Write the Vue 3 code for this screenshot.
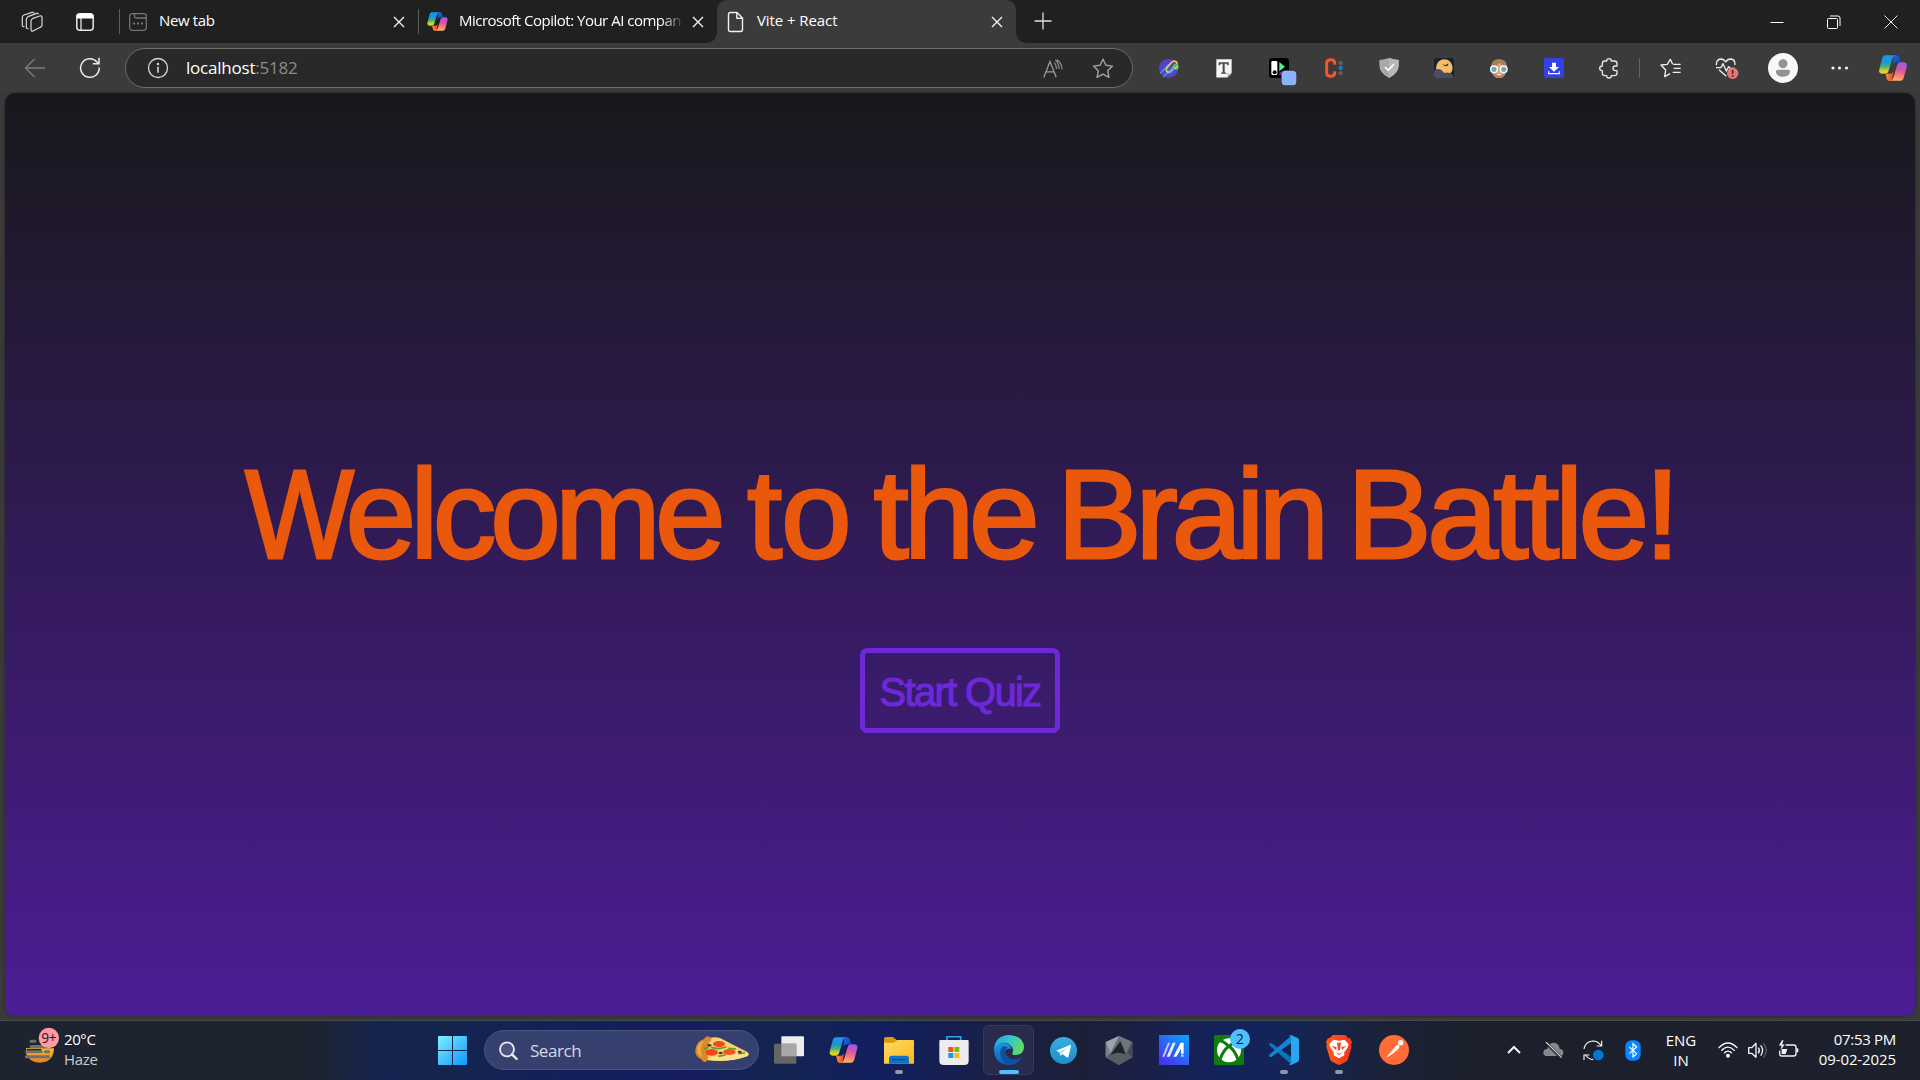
<script setup>
const address = { host: 'localhost', port: ':5182' }
</script>

<template>
  <div class="screen">
    <!-- shared artwork -->
    <svg class="defs" width="0" height="0" aria-hidden="true">
      <defs>
        <linearGradient id="cpA" x1="0" y1="0" x2="0" y2="1">
          <stop offset="0" stop-color="#1c9bea" /><stop offset=".35" stop-color="#1a93d8" /><stop offset=".62" stop-color="#48b07a" /><stop offset=".85" stop-color="#d8d426" /><stop offset="1" stop-color="#f5c518" />
        </linearGradient>
        <linearGradient id="cpB" x1=".6" y1="0" x2=".4" y2="1">
          <stop offset="0" stop-color="#9a5cf0" /><stop offset=".4" stop-color="#d9569c" /><stop offset=".7" stop-color="#fb7a7c" /><stop offset="1" stop-color="#ffb35a" />
        </linearGradient>
        <linearGradient id="cpC" x1="0" y1="0" x2="1" y2="1">
          <stop offset="0" stop-color="#1668d8" /><stop offset="1" stop-color="#1b3fc9" />
        </linearGradient>
        <linearGradient id="cpD" x1="0" y1="0" x2="1" y2="0">
          <stop offset="0" stop-color="#f39a2c" /><stop offset="1" stop-color="#e8433f" />
        </linearGradient>
        <symbol id="copilot" viewBox="0 0 84 78">
          <path d="M44 1h8c5 0 8 3 9 7l4 14H53c-6 0-9 3-11 8z" fill="url(#cpC)" />
          <path d="M20 56h13c5 0 8-3 10-8l-4 30h-8c-5 0-7-4-8-8z" fill="url(#cpD)" />
          <path d="M19 1h30c-6 2-8 6-10 13L29 47c-2 6-5 9-10 9H10C2 56-1 50 1 43L9 12C11 5 14 1 19 1z" fill="url(#cpA)" />
          <path d="M65 22h9c8 0 11 6 9 13l-8 31c-2 7-5 11-10 11H35c5-2 7-6 9-12l10-33c2-7 5-10 11-10z" fill="url(#cpB)" />
        </symbol>
        <symbol id="cross" viewBox="0 0 12 12"><path d="M1 1l10 10M11 1L1 11" stroke="#f2f2f2" stroke-width="1.4" fill="none" /></symbol>
      </defs>
    </svg>

    <header class="tabstrip">
      <div class="cell lead">
        <svg width="22" height="22" viewBox="64 32 66 66" fill="none" stroke="#d8d8d8" stroke-width="3.6" stroke-linejoin="round" stroke-linecap="round">
          <path d="M98 55l22-8q7-2 7 5v22q0 5-5 7l-22 11q-6 2-6-5V62q0-5 4-7z" /><path d="M85 85q-5 1-5-5V57q0-5 5-8l26-10q4-1 5 2" /><path d="M73 79q-5 1-5-5V51q0-5 5-7l24-8q5-1 6 2" />
        </svg>
      </div>
      <div class="cell spaces">
        <svg width="18" height="18" viewBox="0 0 18 18"><rect x=".8" y=".8" width="16.4" height="16.4" rx="3" fill="none" stroke="#e6e6e6" stroke-width="1.5" /><path d="M.5 5.500V4a3.500 3.500 0 013.500-3.500h10A3.500 3.500 0 0117.500 4v1.500z" fill="#fff" /><path d="M5 5v12" stroke="#e6e6e6" stroke-width="1.300" /></svg>
      </div>
      <div class="tab">
        <svg class="fav" width="20" height="20" viewBox="0 0 20 20" fill="none" stroke="#747474" stroke-width="1.300"><rect x="1.700" y="1.700" width="16.600" height="16.600" rx="2.500" /><path d="M6.500 2v2.500q0 1.500 1.500 1.500h10" /><path d="M5 11.500h2M9 11.500h2M13 11.500h2" stroke-width="1.800" /></svg>
        <span class="title t1">New tab</span>
        <svg class="x" width="12" height="12"><use href="#cross" /></svg>
      </div>
      <div class="tab">
        <svg class="fav" width="21" height="19"><use href="#copilot" /></svg>
        <span class="title t2">Microsoft Copilot: Your AI compan</span>
        <svg class="x" width="12" height="12"><use href="#cross" /></svg>
      </div>
      <div class="tab active">
        <svg class="fav" width="20" height="22" viewBox="0 0 20 22" fill="none" stroke="#f0f0f0" stroke-width="1.400" stroke-linejoin="round"><path d="M4.500 1.500h6.500l5.500 5.500v11.500q0 2-2 2h-10q-2 0-2-2v-15q0-2 2-2z" /><path d="M10.800 1.700V7.200h5.500" /></svg>
        <span class="title t3">Vite + React</span>
        <svg class="x" width="12" height="12"><use href="#cross" /></svg>
      </div>
      <svg class="plus" width="18" height="18" viewBox="0 0 18 18"><path d="M9 .5v17M.5 9h17" stroke="#dedede" stroke-width="1.300" /></svg>
      <div class="window">
        <svg width="14" height="14" viewBox="0 0 14 14"><path d="M.5 7.500h13" stroke="#fff" /></svg>
        <svg width="14" height="14" viewBox="0 0 14 14" fill="none" stroke="#fff"><rect x=".5" y="3.500" width="10" height="10" rx="1" /><path d="M3 1h8q2 0 2 2v8" /></svg>
        <svg width="14" height="14" viewBox="0 0 14 14"><path d="M.5.5l13 13M13.500.5l-13 13" stroke="#e8e8e8" /></svg>
      </div>
    </header>

    <nav class="toolbar">
      <div class="cell nav back">
        <svg width="22" height="20" viewBox="0 0 22 20" fill="none" stroke="#7d7d7d" stroke-width="1.300"><path d="M21 10H1.500M10.500 1L1.500 10l9 9" /></svg>
      </div>
      <div class="cell nav">
        <svg width="22" height="22" viewBox="0 0 22 22" fill="none" stroke="#ededed" stroke-width="1.500"><path d="M20.200 10.500A9.300 9.300 0 1118 5L20 6.500M20 .8v5.900h-6.200" /></svg>
      </div>
      <div class="omnibox">
        <svg width="22" height="22" viewBox="0 0 22 22" fill="none" stroke="#d6d6d6" stroke-width="1.300"><circle cx="11" cy="11" r="9.500" /><path d="M11 9.700v6" stroke-width="1.600" /><circle cx="11" cy="6.900" r=".6" fill="#d6d6d6" /></svg>
        <span class="url">{{ address.host }}<span class="port">{{ address.port }}</span></span>
        <svg class="read" width="20" height="19" viewBox="0 0 20 19" fill="none" stroke="#9a9a9a" stroke-width="1.300"><path d="M.8 18.300L7 2.500l6.200 15.800M3 12.800h8" /><path d="M11.500 3.500q2 2.500 2 6.500M12.300 1q3.700 3 3.700 9M14 .8q5 3.200 5 9.800" stroke-width="1.100" /></svg>
        <svg class="star" width="22" height="21" viewBox="0 0 22 21" fill="none" stroke="#a3a3a3" stroke-width="1.400" stroke-linejoin="round"><path d="M11 1.200l2.900 6 6.600.9-4.800 4.600 1.200 6.700L11 16.200l-5.900 3.200 1.200-6.700L1.500 8.100l6.600-.9z" /></svg>
      </div>

      <div class="extensions">
        <div class="cell"><svg width="20" height="20" viewBox="0 0 60 60"><circle cx="29" cy="31" r="29" fill="#5b3fc4" /><path d="M3 47L30 18M13 57L48 20" stroke="#29a8f2" stroke-width="4" /><path d="M21 33l16-19q8-8 15-2 6 7-2 14L36 41q-7 4-12-1-4-4-1-9" fill="none" stroke="#f4c63d" stroke-width="5" /><path d="M25 46q8 0 14-7l10-10" stroke="#37b5fa" stroke-width="3" fill="none" /><circle cx="50" cy="27" r="9" fill="#61b94c" /><path d="M45 27l4 4 7-7" stroke="#fff" stroke-width="2.500" fill="none" /></svg></div>
        <div class="cell"><svg width="16" height="19" viewBox="0 0 48 56"><path d="M1 0h46v41L34 55H1z" fill="#f4f4f4" /><path d="M34 55V43h13z" fill="#bdbdbd" /><path d="M8 9h30v9h-4l-2-4h-6v25l5 2v3H15v-3l5-2V14h-6l-2 4H8z" fill="#484848" /></svg></div>
        <div class="cell"><svg class="tall" width="28" height="28" viewBox="0 0 84 84"><rect width="60" height="60" rx="10" fill="#000" /><rect x="7" y="9" width="18" height="42" rx="4" fill="#fff" /><circle cx="17" cy="43" r="6" fill="#000" /><path d="M31 12l17 14-17 14z" fill="#55f08a" /><path d="M31 45l9-7v12h-9z" fill="#9b22c9" /><rect x="36" y="36" width="48" height="48" rx="13" fill="#2b3242" /><rect x="38" y="38" width="44" height="44" rx="11" fill="#8ab4f8" /></svg></div>
        <div class="cell"><svg width="18" height="20" viewBox="0 0 54 60"><path d="M29 20v-5q0-10-12-10T5 16v28q0 11 12 11t12-10v-5" fill="none" stroke="#fa5527" stroke-width="9" /><circle cx="47" cy="15" r="6" fill="#646464" /><circle cx="47" cy="46" r="6" fill="#646464" /><circle cx="47" cy="30" r="6.500" fill="#1878d2" /></svg></div>
        <div class="cell"><svg width="20" height="20" viewBox="0 0 60 60"><path d="M30 0q14 5 29 6v16q0 24-29 38Q1 46 1 22V6Q16 5 30 0z" fill="#a9a9a9" /><path d="M30 0q14 5 29 6v16q0 24-29 38z" fill="#b8b8b8" /><path d="M18 27l10 10 17-19" fill="none" stroke="#fff" stroke-width="5" /></svg></div>
        <div class="cell"><svg width="20" height="20" viewBox="0 0 60 60"><clipPath id="owl"><rect width="60" height="60" rx="7" /></clipPath><g clip-path="url(#owl)"><rect width="60" height="60" fill="#151f38" /><circle cx="31" cy="29" r="25" fill="#f6bb68" /><path d="M27 18l7 4 9-6q1 8-7 9-7 0-9-7z" fill="#2a2a35" /><path d="M0 38q10-9 22-2l9 9q15-4 24 4l5 11H0z" fill="#4a4c66" /></g></svg></div>
        <div class="cell"><svg width="20" height="19" viewBox="0 0 60 57"><path d="M6 32Q3 1 30 0q27 1 24 32z" fill="#a3834f" /><path d="M9 26q14-3 23-15 7 11 19 15v9Q49 57 30 57T9 35z" fill="#e5a37a" /><path d="M12 43q18 4 36 0-4 14-18 14T12 43z" fill="#c47f5a" /><path d="M24 47h13" stroke="#fff" stroke-width="3" /><circle cx="15" cy="31" r="10" fill="#6fa9bc" stroke="#f2fbfb" stroke-width="4.500" /><circle cx="44" cy="31" r="10" fill="#6fa9bc" stroke="#f2fbfb" stroke-width="4.500" /></svg></div>
        <div class="cell"><svg width="20" height="20" viewBox="0 0 60 60"><rect width="60" height="60" rx="5" fill="#3440e4" /><path d="M24 14h12v13h9L30 41 15 27h9z" fill="#fff" /><path d="M14 40v7h32v-7" fill="none" stroke="#fff" stroke-width="3.500" /></svg></div>
        <div class="cell"><svg width="20" height="21" viewBox="0 0 60 63" fill="none" stroke="#e6e6e6" stroke-width="4" stroke-linejoin="round"><path d="M17 9h6q0-7 7-7t7 7h9q8 0 8 8v7h-5q-7 0-7 7t7 7h5v7q0 8-8 8h-9q0 7-7 7t-7-7h-6q-7 0-7-8v-7q-8 0-8-7t8-7v-7q0-8 7-8z" /></svg></div>
      </div>
      <span class="rule"></span>
      <div class="cell fav2"><svg width="21" height="20" viewBox="0 0 63 60" fill="none" stroke="#ededed" stroke-width="4" stroke-linejoin="round"><path d="M38 43h24M41 31h21M40 19h22M38 19L31 4l-9 15-19 2 14 15-3 20 16-9" /></svg></div>
      <div class="cell heart"><svg width="24" height="21" viewBox="0 0 72 63" fill="none" stroke="#ededed" stroke-width="4" stroke-linejoin="round"><path d="M4 22Q3 4 18 3q9 0 14 9Q37 3 47 3q14 1 13 18M3 29h15l6-12 10 22 7-13 5 5h14M12 35l22 20" /><circle cx="53" cy="46" r="17" fill="#e77777" stroke="none" /><path d="M53 36v12M53 51v5" stroke="#4a2626" stroke-width="5" /></svg></div>
      <div class="cell avatar"><svg width="30" height="30" viewBox="0 0 90 90"><circle cx="45" cy="45" r="45" fill="#f8f8f8" /><circle cx="45" cy="32" r="13.500" fill="#929292" /><path d="M30 50h30q7 0 6 7-2 14-21 14T24 57q-1-7 6-7z" fill="#929292" /></svg></div>
      <div class="cell dots"><svg width="18" height="4" viewBox="0 0 18 4" fill="#f2f2f2"><circle cx="2" cy="2" r="1.600" /><circle cx="8.500" cy="2" r="1.600" /><circle cx="15.500" cy="2" r="1.600" /></svg></div>
      <div class="cell side"><svg width="28" height="26"><use href="#copilot" /></svg></div>
    </nav>

    <main class="page">
      <h1>
        <span class="word welcome"><span class="cap-w">W</span>elcome</span>{{ ' ' }}<span class="word to">to</span>{{ ' ' }}<span class="word the">the</span>{{ ' ' }}<span class="word brain">Brain</span>{{ ' ' }}<span class="word battle">Battle!</span>
      </h1>
      <button type="button">Start Quiz</button>
    </main>

    <footer class="taskbar">
      <div class="weather">
        <svg width="36" height="38" viewBox="72 78 108 114"><defs><linearGradient id="sun" x1="0" y1="0" x2="0" y2="1"><stop offset="0" stop-color="#f8c02e" /><stop offset="1" stop-color="#ee7a1c" /></linearGradient></defs><path d="M78 145h84q-2 43-43 43-32 0-41-28z" fill="url(#sun)" /><path d="M80 147h44v6H80z" fill="#1d242f" /><path d="M93 124h12M93 139.500h42M80 155h44M136 155h10M79 170h67" stroke="#6f7072" stroke-width="9" stroke-linecap="round" /><circle cx="146.500" cy="114" r="30.500" fill="#ff99a4" /><text x="146.500" y="129" class="badge nine">9+</text></svg>
        <div class="lines"><span class="temp">20°C</span><span class="haze">Haze</span></div>
      </div>

      <div class="apps">
        <div class="cell start"><svg width="29" height="29" viewBox="0 0 29 29"><defs><linearGradient id="win" x1="0" y1="0" x2="1" y2="1"><stop offset="0" stop-color="#7df0ff" /><stop offset="1" stop-color="#1095fb" /></linearGradient></defs><path d="M1 0h13v14H0V1q0-1 1-1zM15 0h13q1 0 1 1v13H15zM0 15h14v14H1q-1 0-1-1zM15 15h14v13q0 1-1 1H15z" fill="url(#win)" /></svg></div>
        <div class="search">
          <svg width="19" height="19" viewBox="0 0 57 57" fill="none"><circle cx="24" cy="25" r="21" stroke="#e9ebf2" stroke-width="5.500" fill="#4b5580" /><path d="M39 40l14 14" stroke="#e9ebf2" stroke-width="7" stroke-linecap="round" /></svg>
          <span>Search</span>
          <svg class="pizza" width="54" height="26" viewBox="825 78 162 78"><path d="M856 92q18-15 44-8l82 42q7 6 1 12-50 21-127 12z" fill="#f9d06b" /><path d="M858 148q60 12 125-10l3-7-22-8-80 18z" fill="#fbe08c" /><path d="M851 88q8-12 17-8 10 4 4 12-15 16-8 38 2 18-4 24-10 6-14-5-22-10-20-28 2-26 25-33z" fill="#d98a2a" /><path d="M851 92q-18 6-19 26 0 16 14 24-8-30 5-50z" fill="#edab45" /><ellipse cx="897" cy="102" rx="18" ry="9" fill="#ee4a23" /><ellipse cx="875" cy="127" rx="19" ry="10" fill="#f0481e" /><ellipse cx="928" cy="126" rx="19" ry="9" fill="#f25322" /><path d="M852 116l14-3M873 112l22 4 24-5M925 115l23 2M895 139l22-4M955 131l20-2" stroke="#5d9e25" stroke-width="5" fill="none" /><g fill="#542c3a"><ellipse cx="868" cy="106" rx="6" ry="4" /><ellipse cx="902" cy="129" rx="6" ry="4" /><ellipse cx="959" cy="126" rx="6" ry="4" /></g></svg>
        </div>
        <div class="cell"><svg width="30" height="28" viewBox="0 0 90 84"><rect x="22" y="1" width="68" height="60" rx="3" fill="#ededed" /><rect y="23" width="67" height="60" rx="3" fill="#656565" /><path d="M22 23h45v38H22z" fill="#a8a8a8" /></svg></div>
        <div class="cell"><svg width="29" height="26"><use href="#copilot" /></svg></div>
        <div class="cell"><svg width="30" height="27" viewBox="0 0 90 81"><path d="M0 5q0-5 5-5h22l11 9v12H0z" fill="#dd9a0b" /><path d="M0 17h30l9-8h48q3 0 3 4v67H0z" fill="url(#fold)" /><defs><linearGradient id="fold" x1="0" y1="0" x2="1" y2="1"><stop offset="0" stop-color="#ffda68" /><stop offset="1" stop-color="#fbb917" /></linearGradient></defs><path d="M15 80V65q0-9 8-9h44q8 0 8 9v15z" fill="#1173c8" /><path d="M26 68h37" stroke="#0b4b8c" stroke-width="4" stroke-linecap="round" /></svg><i class="run"></i></div>
        <div class="cell"><svg width="30" height="29" viewBox="0 0 90 87"><path d="M24 20V2h41v18" fill="none" stroke="#29a9ea" stroke-width="5" /><path d="M1 15q0-3 3-3h82q3 0 3 3v59q0 13-13 13H14Q1 87 1 74z" fill="#ececec" /><path d="M28 33h15v15H28z" fill="#f25022" /><path d="M46 33h15v15H46z" fill="#7fba00" /><path d="M28 51h15v15H28z" fill="#00a4ef" /><path d="M46 51h15v15H46z" fill="#ffb900" /></svg></div>
        <div class="cell focus"><svg width="30" height="30" viewBox="0 0 90 90"><defs><linearGradient id="edA" x1="0" y1=".3" x2="1" y2=".5"><stop offset="0" stop-color="#22a5e8" /><stop offset=".5" stop-color="#35c4c9" /><stop offset="1" stop-color="#62dd5c" /></linearGradient><linearGradient id="edB" x1="0" y1="0" x2="0" y2="1"><stop offset="0" stop-color="#1b97e4" /><stop offset="1" stop-color="#0960b8" /></linearGradient></defs><path d="M0 45Q2 24 26 24q24 1 26 18-13-5-18 6-4 16 14 25 16 6 33-5Q70 90 45 90 2 88 0 45z" fill="url(#edB)" /><path d="M28 33q-11 9-9 26 3 25 29 31 20-2 33-22-14 8-29 3-20-8-18-25 2-7 7-8-3-5-13-5z" fill="#0f4f9f" /><path d="M0 44Q2 2 45 0q44 2 45 37-1 22-23 23-14 0-12-6 5-6-1-18Q44 22 26 23 6 26 0 44z" fill="url(#edA)" /></svg><i class="run on"></i></div>
        <div class="cell"><svg width="27" height="27" viewBox="0 0 81 81"><defs><linearGradient id="tg" x1="0" y1="0" x2="0" y2="1"><stop offset="0" stop-color="#38aee0" /><stop offset="1" stop-color="#1b8fc7" /></linearGradient></defs><circle cx="40.500" cy="40.500" r="40.500" fill="url(#tg)" /><path d="M18 41l42-17q4-1 3 4l-8 32q-1 4-5 1L37 51l-6 6-3-12z" fill="#fff" /><path d="M28 45l26-15-19 19-4 8z" fill="#b8d9ea" /></svg></div>
        <div class="cell"><svg width="28" height="29" viewBox="0 0 84 87"><path d="M42 0l40 18v46L42 87 2 64V18z" fill="#687078" /><path d="M42 0l40 18-16 32z" fill="#6c757d" /><path d="M42 0L2 18l14 34z" fill="#9aa4ad" /><path d="M2 18v46l14-12z" fill="#77818a" /><path d="M82 18v46L66 50z" fill="#444a51" /><path d="M2 64l40 23 40-23-16-12-50 2z" fill="#565d65" /><path d="M46 16l16 38-22-4-24 6z" fill="#20242a" /></svg></div>
        <div class="cell"><svg width="30" height="30" viewBox="0 0 90 90"><defs><linearGradient id="ma" x1=".1" y1="1" x2=".9" y2="0"><stop offset="0" stop-color="#4b2cf2" /><stop offset="1" stop-color="#0aa1f8" /></linearGradient></defs><rect width="90" height="90" fill="url(#ma)" /><path d="M10 65l17-42h6L16 65z" fill="#c9cfff" /><path d="M23 65l18-42h9L32 65z" fill="#e6eaff" /><path d="M43 65l22-42h9v33h-8V41L52 65z" fill="#fff" /><path d="M66 59h8v6h-8z" fill="#bcd9ff" /></svg></div>
        <div class="cell"><svg class="xbox" width="36" height="36" viewBox="402 57 108 108"><rect x="402" y="75" width="90" height="90" rx="5" fill="#107c10" /><circle cx="447" cy="121" r="36" fill="#fff" /><path d="M447 110q-13-15-26-18M447 110q13-15 26-18M447 108q-19 15-27 41M447 108q19 15 27 41" fill="none" stroke="#107c10" stroke-width="9" /><circle cx="480" cy="87" r="30" fill="#4cc2ff" /><text x="480" y="101" class="badge">2</text></svg></div>
        <div class="cell"><svg width="30" height="30" viewBox="0 0 90 90"><path d="M7 24q-3-1-5 1-4 3 0 7l61 53 5 2V67z" fill="#0a74bd" /><path d="M7 66q-3 1-5-1-4-3 0-7L63 5l5-3v21z" fill="#1284d0" /><path d="M66 0l20 9q4 2 4 6v60q0 4-4 6l-20 9q-4 0-6-3 6 1 6-5V8q0-6-6-5 2-3 6-3z" fill="#2aa6f1" /></svg><i class="run"></i></div>
        <div class="cell"><svg width="26" height="30" viewBox="0 0 78 90"><defs><linearGradient id="br" x1="0" y1="0" x2="1" y2="0"><stop offset="0" stop-color="#ff5b1a" /><stop offset="1" stop-color="#f6331b" /></linearGradient></defs><path d="M20 0h38l9 10 5-1 6 12-3 8 2 6-12 40q-2 5-26 15Q15 80 13 75L1 35l2-6-3-8L6 9l5 1z" fill="url(#br)" /><path d="M22 14l17 3 17-3 12 14-3 9q-2 5-11 16 3 9-3 10l-12 7-12-7q-6-1-3-10-9-11-11-16l-3-9z" fill="#fff" /><path d="M17 32l15 5-2 8zM61 32l-15 5 2 8zM33 22l6 2 6-2-3 24h-6zM29 52l10 4 10-4-10 9z" fill="#f9471b" /></svg><i class="run"></i></div>
        <div class="cell"><svg width="30" height="30" viewBox="0 0 90 90"><circle cx="45" cy="45" r="45" fill="#ff6c37" /><circle cx="65" cy="23" r="8" fill="#fff" /><path d="M21 68l14-16 16-20q6-4 10 0 2 4-3 9L39 58z" fill="#fff" /><path d="M36 54l17-17M60 36v9l-9 4" stroke="#d9a38d" stroke-width="2" fill="none" /></svg></div>
      </div>

      <div class="tray">
        <svg class="chev" width="14" height="10" viewBox="0 0 14 10"><path d="M1 8l6-6 6 6" fill="none" stroke="#f4f4f4" stroke-width="2" /></svg>
        <svg class="cloud" width="21" height="17" viewBox="0 0 63 51"><path d="M13 42q-12 0-12-10t12-11Q17 2 32 2q16 1 18 18 11 1 11 12 0 10-11 10z" fill="#85888c" /><path d="M9 2l46 46" stroke="#1c212c" stroke-width="9" /><path d="M9 0l47 47" stroke="#d5d6d8" stroke-width="3.500" /></svg>
        <svg class="sync" width="21" height="21" viewBox="0 0 63 63" fill="none" stroke="#f2f2f2" stroke-width="3.500"><path d="M3 27Q7 5 29 3q17 0 26 15M56 2v16H41M31 59q-14-1-24-14M3 60V45h16" /><circle cx="46" cy="45" r="16" fill="#0078d7" stroke="none" /></svg>
        <svg class="bt" width="16" height="21" viewBox="0 0 48 63"><rect x="1" y="1" width="46" height="61" rx="18" fill="#0a84ff" /><path d="M13 21l22 20-11 10V11l11 10-22 20" fill="none" stroke="#fff" stroke-width="3.500" /></svg>
        <div class="lines lang"><span>ENG</span><span>IN</span></div>
        <svg class="wifi" width="20" height="16" viewBox="0 0 60 48" fill="none" stroke="#f4f4f4" stroke-width="4"><path d="M2 18Q30-12 58 18M10 26q20-21 40 0M18 34q12-13 24 0" /><circle cx="30" cy="41" r="4" fill="#f4f4f4" /></svg>
        <svg class="vol" width="20" height="17" viewBox="0 0 60 51" fill="none" stroke="#f4f4f4" stroke-width="4" stroke-linejoin="round"><path d="M2 17h9L24 4v42L11 34H2z" /><path d="M31 17q6 8 0 17M38 10q12 15 0 31" /><path d="M46 4q18 21 0 43" stroke="#5b5f67" /></svg>
        <svg class="bat" width="21" height="18" viewBox="0 0 63 54"><path d="M23 15h24q7 0 7 7v19q0 7-7 7H12q-7 0-7-7V32" fill="none" stroke="#f4f4f4" stroke-width="4" /><path d="M55 25h4q2 0 2 2v8q0 2-2 2h-4z" fill="#f4f4f4" /><path d="M11 27h17L23 42H11z" fill="#f4f4f4" /><path d="M12 0L2 17h8L7 32l14-19h-8l4-13z" fill="#f4f4f4" stroke="#1c212c" stroke-width="1" /></svg>
        <div class="lines clock"><span class="time">07:53 PM</span><span class="date">09-02-2025</span></div>
      </div>
    </footer>
  </div>
</template>

<style>
body {
  margin: 0;
  background: #3b3b3b;
}
</style>

<style scoped>
.screen {
  width: 1920px;
  height: 1080px;
  overflow: hidden;
  display: flex;
  flex-direction: column;
  background: #3a3a3a;
  color: #fff;
  font-family: "Open Sans", "Noto Sans", sans-serif;
  font-size: 15px;
  line-height: 20px;
}
.screen * { box-sizing: border-box; }
svg { display: block; flex: none; }
.defs { position: absolute; }
.cell {
  flex: none;
  display: flex;
  align-items: center;
  justify-content: center;
}

.tabstrip {
  height: 43px;
  flex: none;
  display: flex;
  align-items: center;
  background: #202020;
}
.tabstrip > .lead { width: 64px; }
.tabstrip > .spaces { width: 55px; padding-right: 13px; }
.tab {
  position: relative;
  width: 299px;
  height: 43px;
  flex: none;
  display: flex;
  align-items: center;
  padding: 0 13px 0 9px;
}
.tab::before {
  content: "";
  position: absolute;
  left: 0;
  top: 9px;
  width: 1px;
  height: 25px;
  background: #5c5c5c;
}
.title {
  flex: 1;
  height: 20px;
  margin: 0 16px 3px 11px;
  white-space: nowrap;
}
.t1 { letter-spacing: -0.35px; }
.t2 {
  letter-spacing: -0.5px;
  flex: none;
  width: 228px;
  margin-right: 0;
  -webkit-mask-image: linear-gradient(90deg, #000 202px, transparent 226px);
  mask-image: linear-gradient(90deg, #000 202px, transparent 226px);
}
.t3 { letter-spacing: -0.08px; }
.tab > .x { margin-left: auto; }
.active {
  background: #3b3b3b;
  border-radius: 10px 10px 0 0;
}
.active::before,
.active::after {
  content: "";
  position: absolute;
  top: auto;
  bottom: 0;
  width: 10px;
  height: 10px;
}
.active::before {
  left: -10px;
  background: radial-gradient(circle at 0 0, transparent 9.5px, #3b3b3b 10px);
}
.active::after {
  right: -10px;
  background: radial-gradient(circle at 100% 0, transparent 9.5px, #3b3b3b 10px);
}
.plus { margin: 0 0 2px 18px; }
.window {
  margin-left: auto;
  display: flex;
  gap: 43px;
  padding-right: 22px;
}

.toolbar {
  height: 50px;
  flex: none;
  display: flex;
  align-items: center;
  background: #3b3b3b;
}
.nav { width: 55px; }
.back { width: 62px; padding-left: 8px; }
.omnibox {
  width: 1008px;
  height: 40px;
  margin-left: 8px;
  display: flex;
  align-items: center;
  padding: 0 18px 0 21px;
  border: 1px solid #6b6b6b;
  border-radius: 20px;
  background: #292929;
}
.url {
  margin: 0 auto 0 17px;
  font-size: 17px;
  line-height: 24px;
  letter-spacing: -0.22px;
}
.port { color: #8c8c8c; }
.read { margin-right: 29px; }
.extensions {
  display: flex;
  margin-left: 8.5px;
}
.extensions .cell { width: 55px; height: 30px; }
.tall { margin: 8px -8px 0 0; }
.rule {
  width: 1px;
  height: 20px;
  margin-left: 2.5px;
  background: #656565;
}
.fav2 { width: 60px; }
.heart { width: 54px; }
.avatar { width: 58px; }
.dots { width: 56px; }
.side { width: 50px; }

.page {
  flex: none;
  width: 1910px;
  height: 923px;
  margin: 0 5px;
  padding-top: 357px;
  display: flex;
  flex-direction: column;
  align-items: center;
  border-radius: 10px;
  background: linear-gradient(180deg, #18181b, #4c1d95);
  box-shadow: 0 0 3px #222;
  font-family: "Liberation Sans", Arial, sans-serif;
}
h1 {
  margin: 0;
  display: flex;
  white-space: nowrap;
  font-size: 127px;
  line-height: 128px;
  font-weight: 400;
  color: #ea580c;
  -webkit-text-stroke: 2.8px #ea580c;
}
.word { display: block; flex: none; }
.welcome { width: 502.4px; letter-spacing: -5.9px; }
.cap-w {
  display: inline-block;
  width: 101px;
  letter-spacing: 0;
  transform: scaleX(0.91);
  transform-origin: 0 0;
}
.to { width: 126.6px; letter-spacing: -1.4px; }
.the { width: 183.4px; letter-spacing: -5.2px; }
.brain { width: 290px; letter-spacing: -6.1px; }
.battle { width: 328.4px; letter-spacing: -4.5px; }
button {
  width: 200px;
  height: 85px;
  margin-top: 70px;
  padding: 2px 0 0;
  border: 5px solid #6d28d9;
  border-radius: 7px;
  background: transparent;
  color: #6d28d9;
  font: 400 40px/40px "Liberation Sans", Arial, sans-serif;
  letter-spacing: -1.7px;
  white-space: nowrap;
  -webkit-text-stroke: 1.1px #6d28d9;
}

.taskbar {
  flex: none;
  height: 60px;
  margin-top: 4px;
  padding-bottom: 1px;
  display: flex;
  align-items: center;
  border-top: 1px solid #46494f;
  background: linear-gradient(90deg, #1d242f 0, #1d242f 310px, #13234f 385px, #14244c 440px, #13205a 560px, #151d60 690px, #14244f 765px, #121f5e 880px, #1b1f42 1020px, #1d1f38 1090px, #14225a 1210px, #13245a 1270px, #1b2136 1390px, #1c202c 1470px, #1c212c 100%);
}
.lines {
  display: flex;
  flex-direction: column;
  white-space: nowrap;
}
.weather {
  display: flex;
  align-items: center;
  width: 424px;
  padding: 0 0 2px 24px;
}
.weather svg { margin-top: -8px; }
.weather .lines { margin-left: 4px; }
.temp { letter-spacing: -0.4px; }
.haze { color: #c9cbce; letter-spacing: -0.3px; }
.badge {
  font: 41px "Open Sans", sans-serif;
  text-anchor: middle;
  fill: #14181f;
}
.nine { letter-spacing: -1px; }
.apps { display: flex; align-items: center; }
.apps .cell {
  position: relative;
  width: 55px;
  height: 50px;
}
.apps .start { width: 56px; margin-right: 4px; }
.search {
  width: 275px;
  height: 40px;
  margin-right: 2px;
  display: flex;
  align-items: center;
  padding: 0 9px 0 14px;
  border: 1px solid #4a557f;
  border-radius: 20px;
  background: #35406e;
}
.search span {
  margin: 1px auto 0 12px;
  font-size: 17px;
  line-height: 24px;
  letter-spacing: -0.45px;
  color: #d6d9e3;
}
.pizza { margin-bottom: 3px; }
.focus::before {
  content: "";
  position: absolute;
  inset: 0 2px;
  border: 1px solid #35395a;
  border-radius: 6px;
  background: #282b4b;
}
.focus svg { position: relative; }
.xbox { margin: -6px -6px 0 0; }
.run {
  position: absolute;
  left: 50%;
  bottom: 1px;
  width: 8px;
  height: 4px;
  margin-left: -4px;
  border-radius: 2px;
  background: #9095ab;
}
.on {
  width: 20px;
  margin-left: -10px;
  background: #4cc2ff;
}
.tray {
  margin-left: auto;
  display: flex;
  align-items: center;
  padding-right: 24px;
}
.cloud { margin-left: 22px; }
.sync { margin-left: 19px; }
.bt { margin-left: 21px; }
.lang { width: 40px; margin: 0 17px 0 20px; align-items: center; }
.vol { margin-left: 10px; }
.bat { margin: -3px 0 0 10px; }
.clock { width: 78px; margin: 0 0 2px 19px; align-items: flex-end; }
.time { letter-spacing: -0.3px; }
.date { letter-spacing: -0.1px; }
</style>
